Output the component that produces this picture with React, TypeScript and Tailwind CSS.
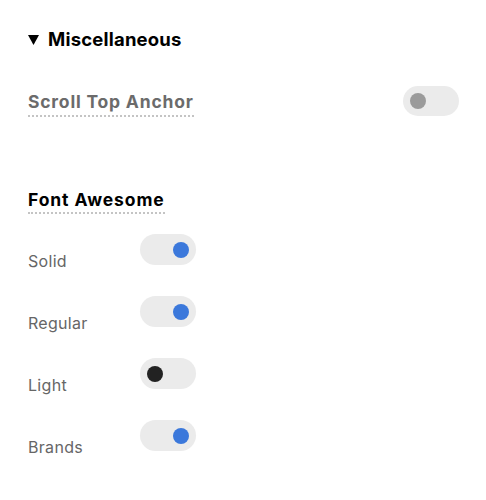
import React from "react";

type ToggleProps = { on: boolean; knob: string };

function Toggle({ on, knob }: ToggleProps) {
  return (
    <div
      className={`flex h-[31px] w-[56px] items-center rounded-full bg-[#ebebeb] px-[7px] ${
        on ? "justify-end" : "justify-start"
      }`}
    >
      <div className={`h-4 w-4 rounded-full ${knob}`} />
    </div>
  );
}

const styles = [
  { label: "Solid", on: true, knob: "bg-[#3b78db]" },
  { label: "Regular", on: true, knob: "bg-[#3b78db]" },
  { label: "Light", on: false, knob: "bg-[#222222]" },
  { label: "Brands", on: true, knob: "bg-[#3b78db]" },
];

export default function App() {
  return (
    <div className="h-[500px] w-[486px] bg-white pl-[28px] pr-[27px] pt-[28px] font-['Inter','Liberation_Sans',sans-serif]">
      <div className="flex items-center gap-[9px]">
        <svg width="11" height="10" viewBox="0 0 11 10" className="mt-[1px]">
          <path d="M0 0 H11 L5.5 10 Z" fill="#000" />
        </svg>
        <h2 className="text-[18.5px] font-bold leading-[22px] tracking-[0.2px] text-black">Miscellaneous</h2>
      </div>

      <div className="mt-[35px] flex items-center justify-between">
        <span className="mt-[6px] border-b-2 border-dotted border-[#c4c4c4] pb-[2px] text-[17.5px] font-bold leading-[22px] tracking-[0.8px] text-[#6b6b6b]">
          Scroll Top Anchor
        </span>
        <div className="flex h-[30px] w-[56px] items-center rounded-full bg-[#ebebeb] px-[7px]">
          <div className="h-4 w-4 rounded-full bg-[#9b9b9b]" />
        </div>
      </div>

      <div className="mt-[71px]">
        <span className="border-b-2 border-dotted border-[#c4c4c4] pb-[2px] text-[17.5px] font-bold leading-[22px] tracking-[0.9px] text-black">
          Font Awesome
        </span>
      </div>

      <div className="mt-[22px] flex flex-col gap-[25px]">
        {styles.map((s) => (
          <div key={s.label} className="flex items-end">
            <span className="w-[112px] text-[16px] leading-[20px] tracking-[0.3px] text-[#666666]">
              {s.label}
            </span>
            <div className="mb-[6px]">
              <Toggle on={s.on} knob={s.knob} />
            </div>
          </div>
        ))}
      </div>
    </div>
  );
}
